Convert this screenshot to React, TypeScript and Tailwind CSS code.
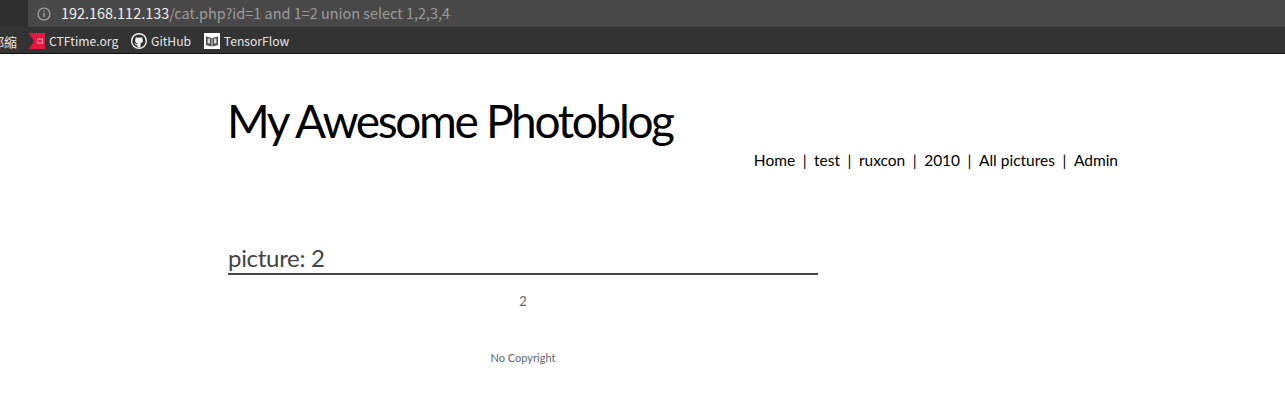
import React from "react";

const ui = { fontFamily: '"Noto Sans CJK SC","Open Sans",sans-serif' };

function Info() {
  return (
    <svg width="14" height="14" viewBox="0 0 14 14" fill="none" className="shrink-0">
      <circle cx="7" cy="7" r="6" stroke="#a8a8a8" strokeWidth="1.2" />
      <rect x="6.4" y="3.4" width="1.3" height="1.4" fill="#a8a8a8" />
      <rect x="6.4" y="5.8" width="1.3" height="4.6" fill="#a8a8a8" />
    </svg>
  );
}

function CtfIcon() {
  return (
    <svg width="16" height="16" viewBox="0 0 16 16" className="shrink-0">
      <path d="M0 0H16V16H0L5 8Z" fill="#e8173f" />
      <rect x="8.5" y="6" width="5" height="4" fill="none" stroke="#f7a5b5" strokeWidth="1" />
    </svg>
  );
}

function GithubIcon() {
  return (
    <svg width="16" height="16" viewBox="0 0 16 16" className="shrink-0">
      <circle cx="8" cy="8" r="8" fill="#f2f2f2" />
      <circle cx="8" cy="8" r="6.6" fill="#2f2f2f" />
      <path
        d="M6.4 14v-1.8c-1.5.3-2-.6-2.2-1-.1-.3-.4-.7-.6-.8-.3-.1-.5-.4 0-.4.4 0 .8.4.9.6.6.9 1.4.7 1.9.5 0-.4.2-.7.4-.8-1.4-.2-2.7-.7-2.7-2.9 0-.6.2-1.2.6-1.6-.1-.2-.3-.8.1-1.6 0 0 .5-.2 1.7.6a5.6 5.6 0 0 1 3 0c1.2-.8 1.7-.6 1.7-.6.4.8.2 1.4.1 1.6.4.4.6 1 .6 1.6 0 2.2-1.3 2.7-2.7 2.9.2.2.4.6.4 1V14c-1 .4-2.4.4-3.2 0Z"
        fill="#f2f2f2"
      />
    </svg>
  );
}

function BookIcon() {
  return (
    <svg width="16" height="16" viewBox="0 0 16 16" className="shrink-0">
      <rect width="16" height="16" fill="#ffffff" />
      <path d="M2 3.5 7.6 5v8.5L2 12Z M14 3.5 8.4 5v8.5L14 12Z" fill="#4a4a4a" />
      <path d="M3.5 5.5h2.5v5H3.5Z M10 5.5h2.5v5H10Z" fill="#d8d8d8" />
    </svg>
  );
}

function Bookmark({ icon, label }: { icon: React.ReactNode; label: string }) {
  return (
    <div className="flex items-center gap-[4px]">
      {icon}
      <span className="text-[12.15px] leading-none text-[#e6e6e6]">{label}</span>
    </div>
  );
}

const links = ["Home", "test", "ruxcon", "2010", "All pictures", "Admin"];

export default function App() {
  return (
    <div className="w-[1285px] h-[404px] overflow-hidden bg-white" style={{ fontFamily: '"Lato","Open Sans",sans-serif' }}>
      <div className="h-[27px] bg-[#2f2f2f] pl-[28px]">
        <div className="h-[27px] bg-[#484848] flex items-center pl-[9px] gap-[10px]" style={ui}>
          <Info />
          <div className="text-[14.45px] leading-none whitespace-nowrap text-[#9c9c9c]">
            <span className="text-[#f0f0f0]">192.168.112.133</span>/cat.php?id=1 and 1=2 union select 1,2,3,4
          </div>
        </div>
      </div>
      <div className="h-[27px] bg-[#333333] border-b border-[#111111] flex items-center overflow-hidden pt-[2px]" style={ui}>
        <span className="text-[13px] leading-none text-[#e6e6e6] w-[29px] shrink-0 -ml-[9px] mr-[9px] whitespace-nowrap">郵縮</span>
        <div className="flex items-center gap-[12.8px]">
          <Bookmark icon={<CtfIcon />} label="CTFtime.org" />
          <Bookmark icon={<GithubIcon />} label="GitHub" />
          <Bookmark icon={<BookIcon />} label="TensorFlow" />
        </div>
      </div>

      <div className="pl-[228px] w-[1118px]">
        <h1 className="pt-[38px] -ml-[1px] text-[46px] leading-[58px] text-black font-normal whitespace-nowrap tracking-[-2.35px]">My Awesome Photoblog</h1>
        <nav className="flex justify-end text-[15.5px] leading-[20px] text-black">
          {links.map((l, i) => (
            <span key={l} className="flex whitespace-nowrap">
              {i > 0 && <span className="px-[7.5px]">|</span>}
              {l}
            </span>
          ))}
        </nav>
        <div className="w-[590px] mt-[73px]">
          <h2 className="text-[24px] leading-[30px] text-[#444444] font-normal border-b-2 border-[#444444] tracking-[-0.3px]">picture: 2</h2>
          <p className="mt-[19px] text-center text-[13px] leading-[15px] text-[#666666]">2</p>
          <p className="mt-[42px] text-center text-[11px] leading-[14px] text-[#5c6670]">No Copyright</p>
        </div>
      </div>
    </div>
  );
}
